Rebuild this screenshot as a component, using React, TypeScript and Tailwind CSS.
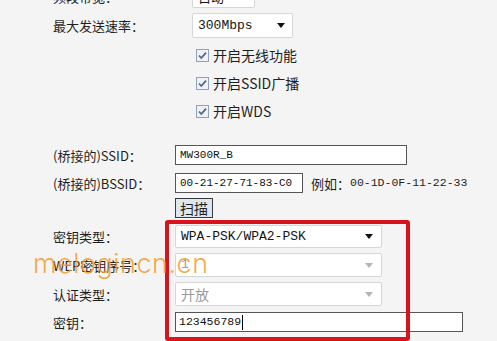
import type { ReactNode } from 'react'

const label = "font-['Noto_Sans_CJK_SC',sans-serif] text-[13px] text-[#1f1f1f] leading-none"
const mono = "font-['Liberation_Mono','Noto_Sans_CJK_SC',monospace]"

function Arrow({ disabled }: { disabled?: boolean }) {
  return (
    <svg width="8" height="5" viewBox="0 0 8 5" className="shrink-0">
      <path d="M0 0h8L4 5z" fill={disabled ? '#b5b5b5' : '#111'} />
    </svg>
  )
}

function Select({ value, className, disabled }: { value: string; className: string; disabled?: boolean }) {
  return (
    <div
      className={`flex items-center justify-between rounded-[2px] border border-[#d6d6d6] bg-white pl-[5px] pr-[7px] ${className}`}
    >
      <span className={disabled ? 'text-[#9a9a9a]' : 'text-[#141414]'}>{value}</span>
      <Arrow disabled={disabled} />
    </div>
  )
}

function CheckBox({ text }: { text: ReactNode }) {
  return (
    <div className="flex h-[28px] items-center gap-[4px] pl-[4px]">
      <svg width="13" height="13" viewBox="0 0 13 13">
        <rect x="0.5" y="0.5" width="12" height="12" fill="#eef2f6" stroke="#8fa2b8" />
        <path d="M3 6.5l2.3 2.5L10 3.6" stroke="#4d6a8a" strokeWidth="1.8" fill="none" />
      </svg>
      <span className={`${label} text-[14px]`}>{text}</span>
    </div>
  )
}

function Row({ name, width, className = '', children }: { name: string; width: string; className?: string; children: ReactNode }) {
  return (
    <div className={`flex items-center ${className}`}>
      <div className={`${label} ${width} shrink-0`}>{name}</div>
      {children}
    </div>
  )
}

export default function App() {
  return (
    <div className="relative h-[341px] w-[497px] overflow-hidden bg-[#f4f4f4]">
      {/* 基本设置 */}
      <div className="mt-[-15px] flex flex-col pl-[53px]">
        <Row name="频段带宽：" width="w-[139px]" className="h-[23px]">
          <Select value="自动" className={`h-[23px] w-[63px] ${label} text-[13px]`} />
        </Row>
        <Row name="最大发送速率：" width="w-[139px]" className="mt-[5px] h-[25px]">
          <Select value="300Mbps" className={`h-[25px] w-[101px] ${mono} text-[13px]`} />
        </Row>
        <div className="mt-[3px] flex flex-col pl-[139px]">
          <CheckBox text="开启无线功能" />
          <CheckBox text="开启SSID广播" />
          <CheckBox text="开启WDS" />
        </div>
      </div>

      {/* WDS 设置 */}
      <div className="mt-[20px] flex flex-col pl-[53px]">
        <Row name="(桥接的)SSID：" width="w-[122px]" className="h-[20px]">
          <div className={`flex h-[20px] w-[232px] items-center border border-[#555] bg-white pl-[4px] ${mono} text-[11px] text-[#111]`}>
            MW300R_B
          </div>
        </Row>
        <Row name="(桥接的)BSSID：" width="w-[122px]" className="mt-[8px] h-[20px]">
          <div className={`flex h-[20px] w-[128px] items-center border border-[#555] bg-white pl-[4px] ${mono} text-[11px] text-[#111]`}>
            00-21-27-71-83-C0
          </div>
          <span className={`ml-[8px] ${label} text-[13px]`}>例如：</span>
          <span className={`${mono} text-[11.5px] text-[#1f1f1f]`}>00-1D-0F-11-22-33</span>
        </Row>
        <div className="mt-[5px] pl-[122px]">
          <div className={`flex h-[20px] w-[38px] items-center justify-center border border-[#3a3a3a] bg-[#dde7f0] ${label} text-[14px]`}>
            扫描
          </div>
        </div>
        <Row name="密钥类型：" width="w-[122px]" className="mt-[7px] h-[23px]">
          <Select value="WPA-PSK/WPA2-PSK" className={`h-[23px] w-[207px] ${mono} text-[13px] pr-[8px]`} />
        </Row>
        <Row name="WEP密钥序号：" width="w-[122px]" className="mt-[5px] h-[24px]">
          <Select value="1" disabled className={`h-[24px] w-[207px] ${mono} text-[13px] pr-[8px]`} />
        </Row>
        <Row name="认证类型：" width="w-[122px]" className="mt-[5px] h-[24px]">
          <Select value="开放" disabled className={`h-[24px] w-[207px] ${label} text-[14px] pr-[8px]`} />
        </Row>
        <Row name="密钥：" width="w-[122px]" className="mt-[6px] h-[20px]">
          <div className={`flex h-[20px] w-[288px] items-center border border-[#555] bg-white pl-[3px] ${mono} text-[11.5px] text-[#111]`}>
            123456789<span className="ml-[1px] h-[15px] w-px bg-black" />
          </div>
        </Row>
      </div>

      {/* 标注框 */}
      <div className="pointer-events-none absolute left-[165px] top-[220px] h-[121px] w-[245px] rounded-[3px] border-[4px] border-[#d8131b]" />

      {/* 水印 */}
      <div className="pointer-events-none absolute left-[33px] top-[250px] font-['Inter',sans-serif] text-[27px] font-light leading-none tracking-[0.5px] text-[#f39a2c]/85">
        melogincn.cn
      </div>
    </div>
  )
}
